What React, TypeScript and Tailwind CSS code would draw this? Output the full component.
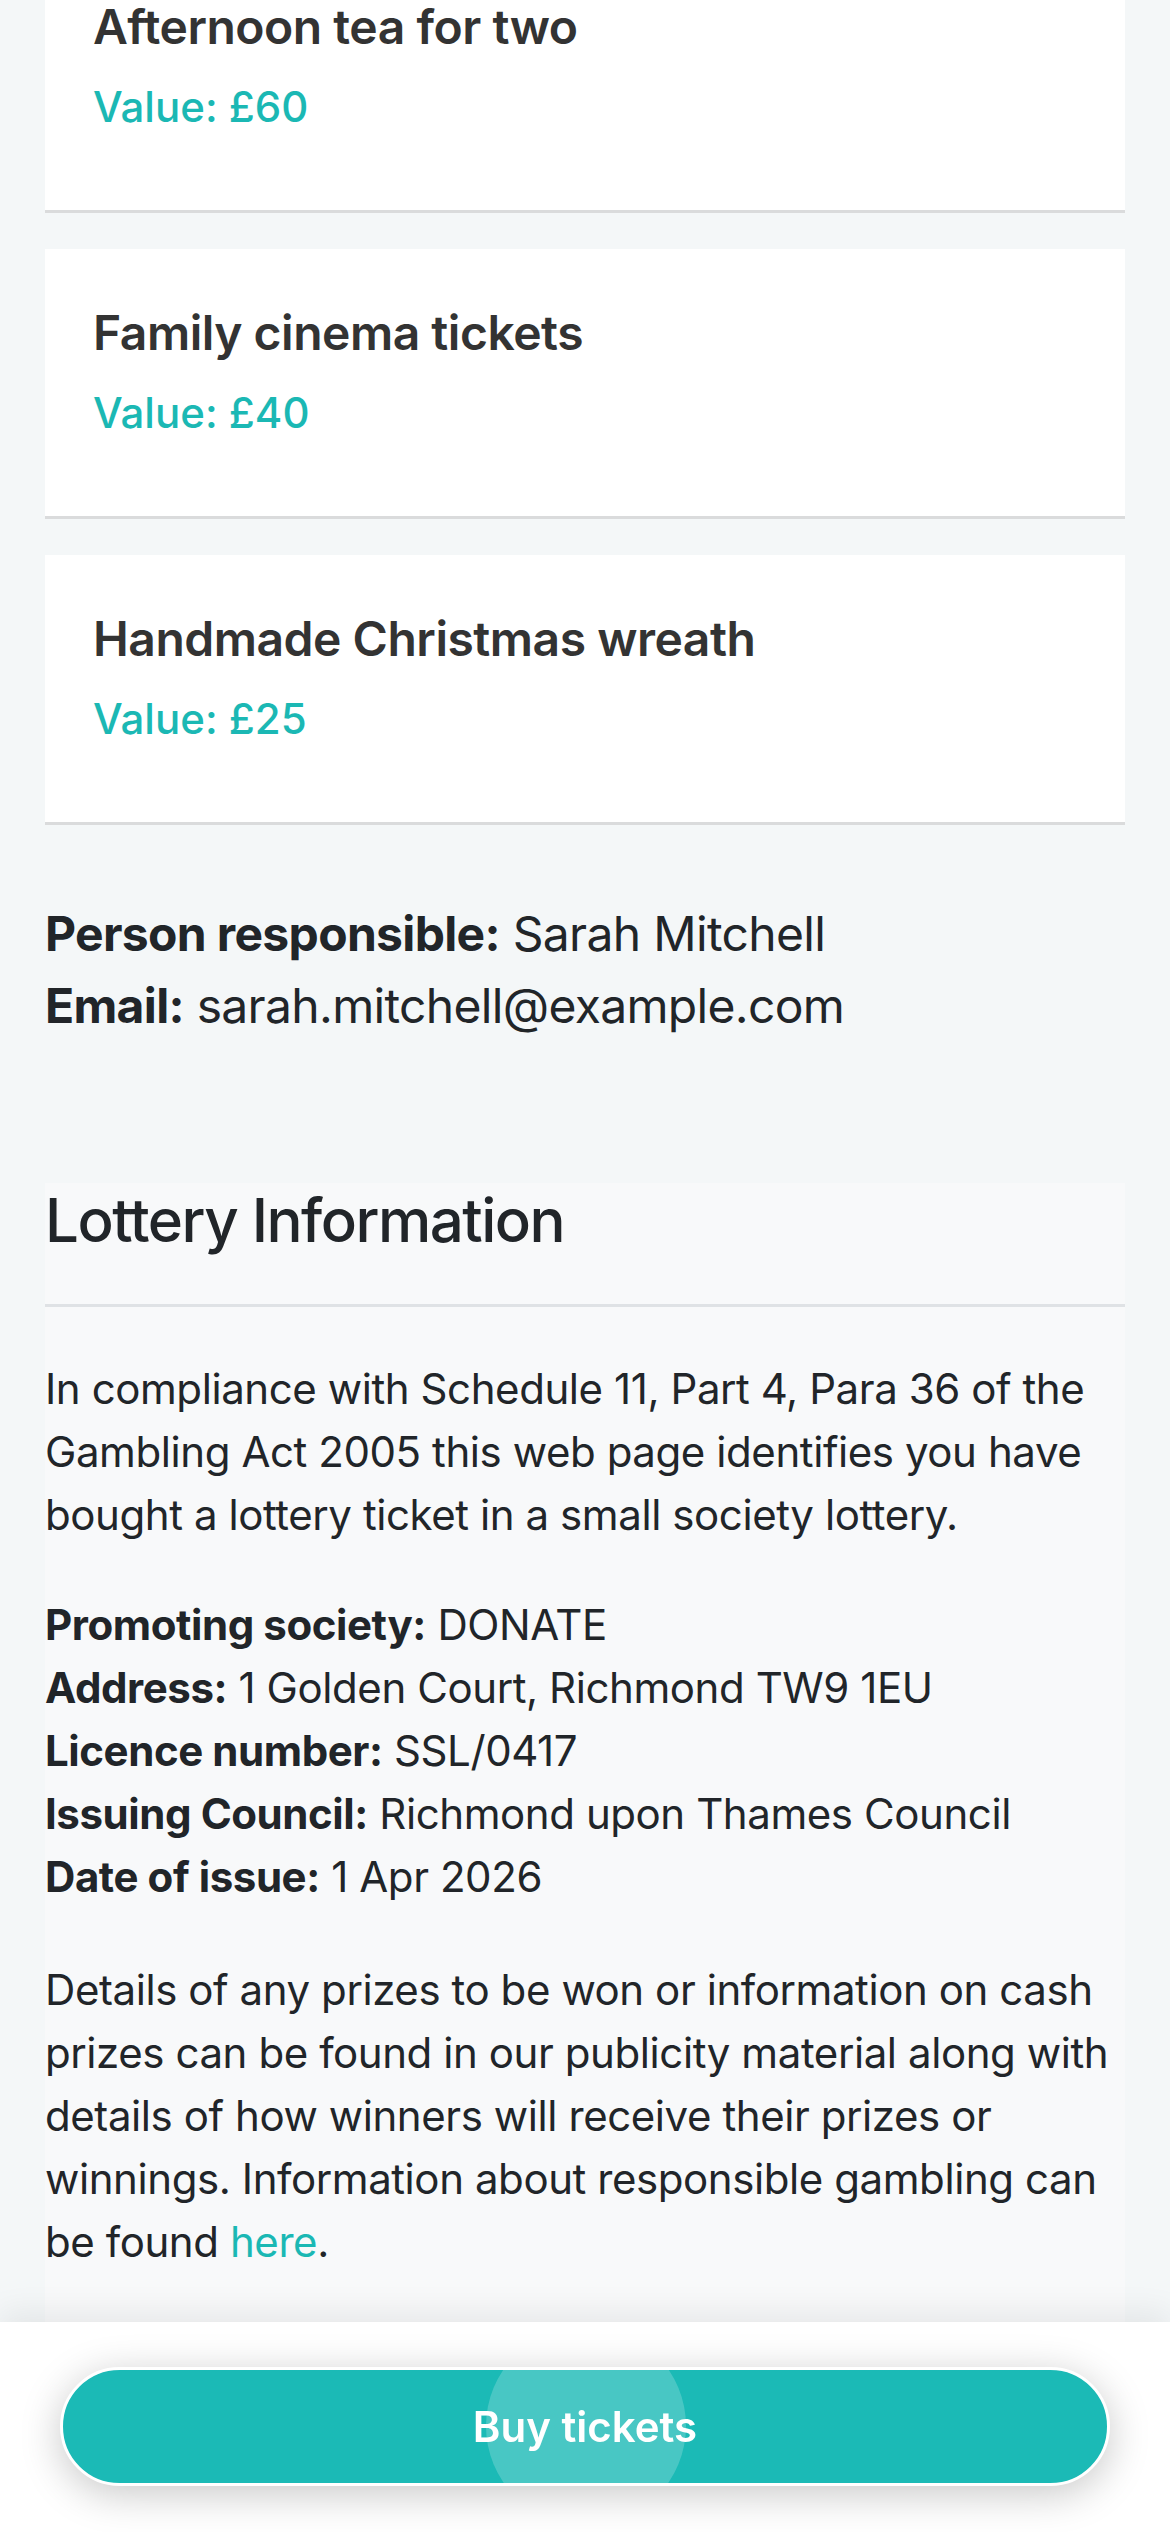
import React from "react";

type Prize = {
    title: string;
    value: string;
};

const prizes: Prize[] = [
    { title: "Afternoon tea for two", value: "£60" },
    { title: "Family cinema tickets", value: "£40" },
    { title: "Handmade Christmas wreath", value: "£25" },
];

const details: { label: string; value: string }[] = [
    { label: "Promoting society:", value: "DONATE" },
    { label: "Address:", value: "1 Golden Court, Richmond TW9 1EU" },
    { label: "Licence number:", value: "SSL/0417" },
    { label: "Issuing Council:", value: "Richmond upon Thames Council" },
    { label: "Date of issue:", value: "1 Apr 2026" },
];

function PrizeCard({ prize }: { prize: Prize }) {
    return (
        <div className="bg-white px-[48px] pt-[48px] pb-[72px] border-b-[3px] border-[#dadbdc]">
            <div className="text-[48px] leading-[72px] font-semibold tracking-[-0.01em] text-[#333333]">
                {prize.title}
            </div>
            <div className="mt-[12px] text-[42px] leading-[63px] font-medium text-[#1bb8b4]">
                Value: {prize.value}
            </div>
        </div>
    );
}

export default function App() {
    return (
        <div
            className="min-h-screen bg-[#f4f7f8] text-[#212529]"
            style={{ fontFamily: "Inter, 'Noto Sans', sans-serif" }}
        >
            <div className="px-[45px] -mt-[57px]">
                {/* Prizes */}
                <div className="flex flex-col gap-[36px]">
                    {prizes.map((p) => (
                        <PrizeCard key={p.title} prize={p} />
                    ))}
                </div>

                {/* Contact */}
                <div className="mt-[73px] text-[48px] leading-[72px] tracking-[-0.014em]">
                    <div>
                        <span className="font-bold">Person responsible:</span> Sarah Mitchell
                    </div>
                    <div>
                        <span className="font-bold">Email:</span> sarah.mitchell@example.com
                    </div>
                </div>

                {/* Lottery info */}
                <section className="mt-[141px] bg-[#f8f9fa] pb-[160px]">
                    <h2 className="pt-[1px] pb-[48px] border-b-[3px] border-[#dfe2e5] text-[60px] leading-[72px] font-medium tracking-[-0.025em]">
                        Lottery Information
                    </h2>
                    <div className="pt-[50px] text-[42px] leading-[63px] tracking-[-0.01em]">
                        <p className="mb-[47px]">
                            In compliance with Schedule 11, Part 4, Para 36 of the Gambling Act 2005 this web page
                            identifies you have bought a lottery ticket in a small society lottery.
                        </p>
                        <div className="mb-[50px]">
                            {details.map((d) => (
                                <div key={d.label}>
                                    <span className="font-bold">{d.label}</span> {d.value}
                                </div>
                            ))}
                        </div>
                        <p>
                            Details of any prizes to be won or information on cash prizes can be found in our
                            publicity material along with details of how winners will receive their prizes or
                            winnings. Information about responsible gambling can be found{" "}
                            <a className="text-[#1bb8b4]">here</a>.
                        </p>
                    </div>
                </section>
            </div>

            {/* Sticky footer */}
            <div className="fixed bottom-0 inset-x-0 h-[210px] bg-white px-[60px] pt-[45px] shadow-[0_-10px_30px_rgba(0,0,0,0.07)]">
                <button className="relative w-full h-[119px] overflow-hidden rounded-full border-[3px] border-white bg-[#1bbab6] text-white text-[42px] font-semibold shadow-[0_8px_40px_rgba(0,0,0,0.22)]">
                    <span className="absolute left-[423px] -top-[44px] w-[200px] h-[200px] rounded-full bg-white/20" />
                    <span className="relative">Buy tickets</span>
                </button>
            </div>
        </div>
    );
}
